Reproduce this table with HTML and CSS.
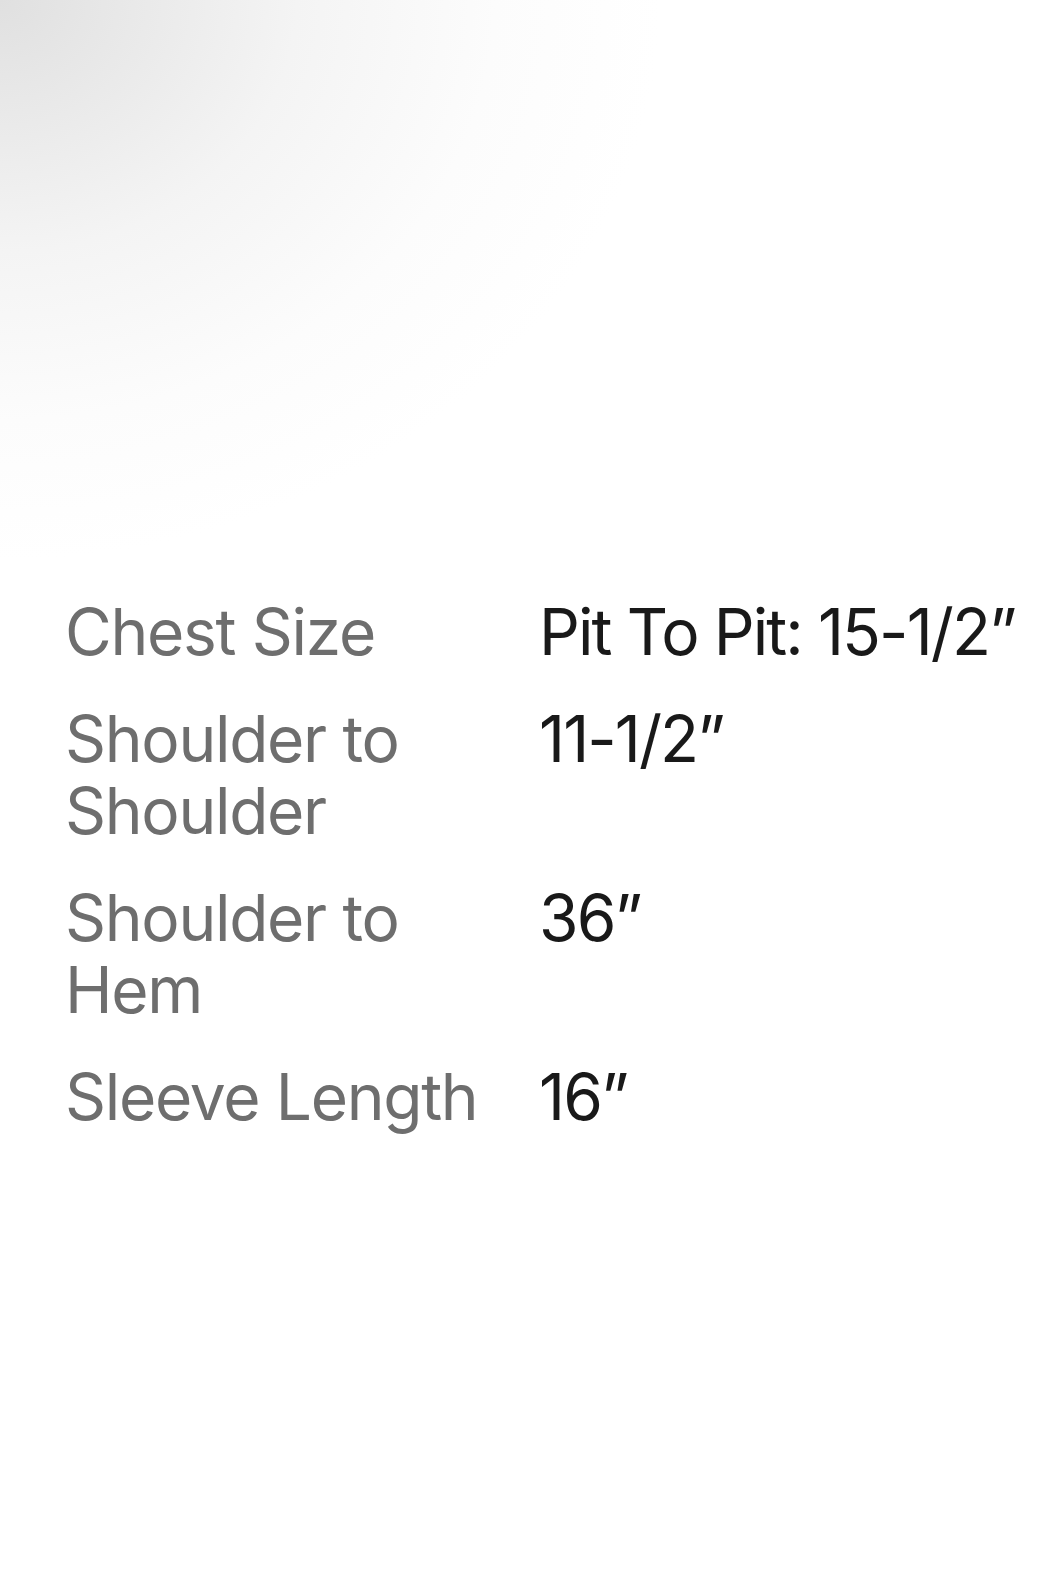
FILE: index.html
```html
<!DOCTYPE html>
<html lang="en">
<head>
<meta charset="utf-8">
<title>Measurements</title>
<link rel="stylesheet" href="styles.css">
</head>
<body>
<main class="page">
  <dl class="specs">
    <dt class="label">Chest Size</dt>
    <dd class="value">Pit To Pit: 15-1/2”</dd>
    <dt class="label">Shoulder to Shoulder</dt>
    <dd class="value">11-1/2”</dd>
    <dt class="label">Shoulder to Hem</dt>
    <dd class="value">36”</dd>
    <dt class="label">Sleeve Length</dt>
    <dd class="value">16”</dd>
  </dl>
</main>
</body>
</html>
```

FILE: styles.css
```css
html, body {
  margin: 0;
  padding: 0;
  background: #fff;
}
.page {
  width: 1042px;
  height: 1581px;
  box-sizing: border-box;
  padding: 596px 0 0 65px;
  background: radial-gradient(ellipse 660px 560px at 0 0, #e0e0e0 0%, #f4f4f4 45%, #fcfcfc 75%, #ffffff 100%);
  font-family: Inter, "Open Sans", sans-serif;
}
.specs {
  margin: 0;
  display: grid;
  grid-template-columns: 474px 1fr;
  row-gap: 35px;
  font-size: 64px;
  line-height: 72px;
}
.label {
  margin: 0;
  color: #6e6e6e;
  letter-spacing: -1.3px;
}
.value {
  margin: 0;
  color: #191919;
  letter-spacing: -1.9px;
  white-space: nowrap;
}
```
